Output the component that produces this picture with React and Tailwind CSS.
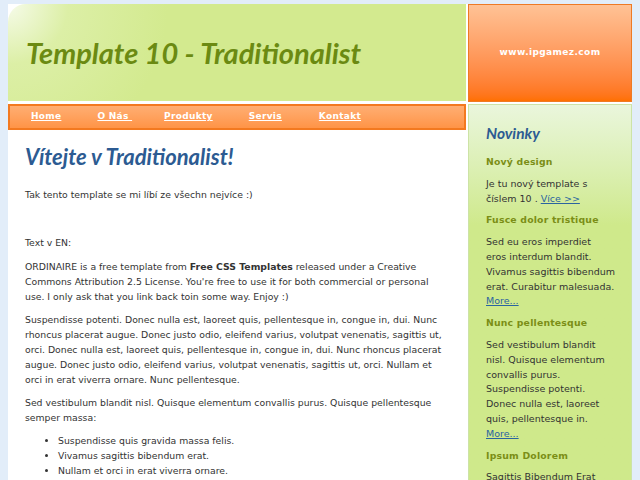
import React from "react";

const navItems = [
  { label: "Home", cls: "mr-[36px]" },
  { label: "O Nás ", cls: "mr-[32px]" },
  { label: "Produkty", cls: "mr-[36px]" },
  { label: "Servis", cls: "mr-[37px]" },
  { label: "Kontakt", cls: "" },
];

// lines kept as in the original layout
const news = [
  {
    title: "Nový design",
    lines: ["Je tu nový template s", "číslem 10 . "],
    link: "Více >>",
    inline: true,
  },
  {
    title: "Fusce dolor tristique",
    lines: ["Sed eu eros imperdiet", "eros interdum blandit.", "Vivamus sagittis bibendum", "erat. Curabitur malesuada."],
    link: "More...",
  },
  {
    title: "Nunc pellentesque",
    lines: [
      "Sed vestibulum blandit",
      "nisl. Quisque elementum",
      "convallis purus.",
      "Suspendisse potenti.",
      "Donec nulla est, laoreet",
      "quis, pellentesque in.",
    ],
    link: "More...",
  },
  {
    title: "Ipsum Dolorem",
    lines: ["Sagittis Bibendum Erat"],
    link: null,
  },
];

const body = { fontFamily: '"DejaVu Sans", Verdana, sans-serif' };
const display = { fontFamily: 'Lato, "Open Sans", sans-serif' };

export default function App() {
  return (
    <div className="min-h-[480px] w-[640px] overflow-hidden bg-[#e2edf9] pl-[8px] pt-[4px]" style={body}>
      <div className="flex w-[624px] gap-[2px] bg-white">
        {/* left column */}
        <div className="flex w-[458px] flex-col">
          <div className="flex h-[97px] items-center rounded-tl-[18px] bg-[radial-gradient(circle_at_0%_0%,#f6fbea_0px,#dcefa6_60px,#d3ea8f_160px)] pl-[18px]">
            <h1 className="text-[29px] font-bold italic text-[#6b8a12]" style={display}>
              Template 10 - Traditionalist
            </h1>
          </div>
          <div className="mt-[3px] flex h-[26px] items-center border-2 border-[#f3791f] bg-gradient-to-b from-[#ffae72] to-[#ff9446] pl-[21px]">
            {navItems.map((item) => (
              <a key={item.label} className={`${item.cls} whitespace-pre text-[9px] font-bold tracking-[0.3px] text-white underline`}>
                {item.label}
              </a>
            ))}
          </div>
          {/* content */}
          <div className="pl-[17px] pr-[18px] pt-[15px] text-[9.3px] leading-[15px] text-[#333]">
            <h2 className="mb-[18px] text-[22px] font-bold italic leading-[24px] text-[#2c5b92]" style={display}>
              Vítejte v Traditionalist!
            </h2>
            <p className="mb-[9px]">Tak tento template se mi líbí ze všechn nejvíce :)</p>
            <p className="mb-[9px]">&nbsp;</p>
            <p className="mb-[9px]">Text v EN:</p>
            <p className="mb-[8px]">
              ORDINAIRE is a free template from <b>Free CSS Templates</b> released under a Creative Commons Attribution 2.5
              License. You're free to use it for both commercial or personal use. I only ask that you link back toin some
              way. Enjoy :)
            </p>
            <p className="mb-[8px]">
              Suspendisse potenti. Donec nulla est, laoreet quis, pellentesque in, congue in, dui. Nunc rhoncus placerat
              augue. Donec justo odio, eleifend varius, volutpat venenatis, sagittis ut, orci. Donec nulla est, laoreet
              quis, pellentesque in, congue in, dui. Nunc rhoncus placerat augue. Donec justo odio, eleifend varius,
              volutpat venenatis, sagittis ut, orci. Nullam et orci in erat viverra ornare. Nunc pellentesque.
            </p>
            <p className="mb-[8px]">
              Sed vestibulum blandit nisl. Quisque elementum convallis purus. Quisque pellentesque semper massa:
            </p>
            <ul className="list-disc pl-[33px]">
              <li>Suspendisse quis gravida massa felis.</li>
              <li>Vivamus sagittis bibendum erat.</li>
              <li>Nullam et orci in erat viverra ornare.</li>
            </ul>
          </div>
        </div>

        {/* right column */}
        <div className="flex w-[164px] flex-col gap-[2px]">
          <div className="flex h-[98px] items-center justify-center border border-[#ee7a24] bg-gradient-to-b from-[#ffc295] to-[#ff7000]">
            <span className="text-[9px] font-bold tracking-[0.4px] text-white">www.ipgamez.com</span>
          </div>
          <div className="min-h-[380px] border border-[#cde3a6] bg-gradient-to-b from-[#eaf6dc] to-[#cfe98b] to-[120px] pl-[17px] pr-[8px] pt-[18px] text-[9.5px] leading-[14.8px] text-[#333]">
            <h3 className="mb-[12px] text-[15.5px] font-bold italic leading-[20px] text-[#2c5b92]" style={display}>
              Novinky
            </h3>
            {news.map((n) => (
              <div key={n.title}>
                <h4 className="mb-[7px] text-[9.3px] font-bold tracking-[0.2px] text-[#7b8e16]">{n.title}</h4>
                <div className="mb-[7px] whitespace-nowrap">
                  {n.lines.map((line, i) => (
                    <div key={i}>
                      {line}
                      {n.inline && i === n.lines.length - 1 && <a className="text-[#2a64a0] underline">{n.link}</a>}
                    </div>
                  ))}
                  {n.link && !n.inline && (
                    <div>
                      <a className="text-[#2a64a0] underline">{n.link}</a>
                    </div>
                  )}
                </div>
              </div>
            ))}
          </div>
        </div>
      </div>
    </div>
  );
}
